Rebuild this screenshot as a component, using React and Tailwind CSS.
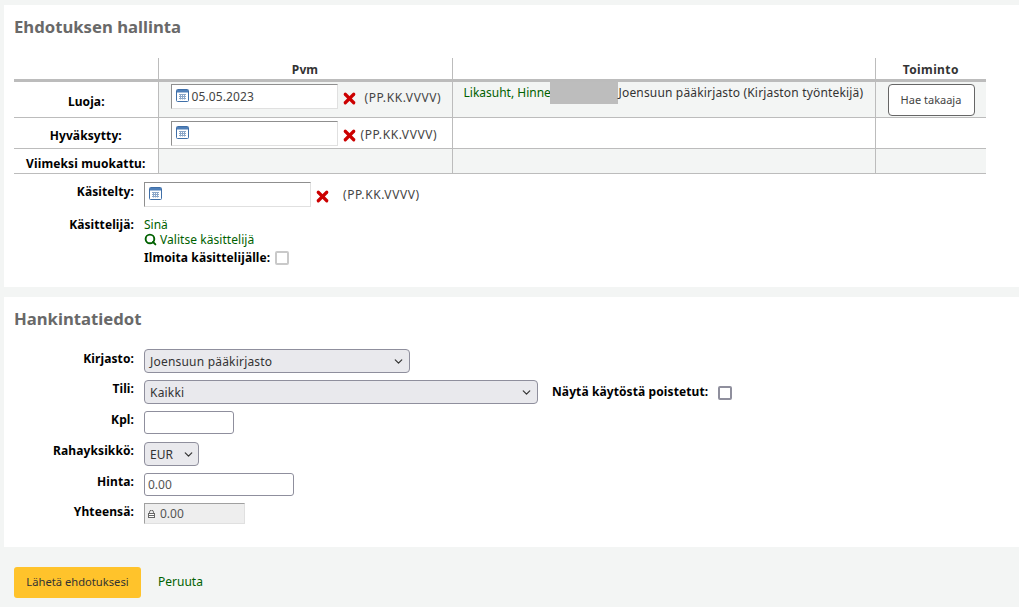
import React from 'react';
import { Search, ChevronDown, X } from 'lucide-react';

const green = 'text-[#006100]';

const CalendarIcon = () => (
  <svg width="13" height="13" viewBox="0 0 13 13" className="shrink-0">
    <rect x="0.5" y="0.5" width="12" height="12" rx="1" fill="#fff" stroke="#3f6fa8" />
    <rect x="1" y="1" width="11" height="2.5" fill="#4f7fb8" />
    <path d="M3 5.5h7M3 7.5h7M3 9.5h7M4.5 5v5.5M6.5 5v5.5M8.5 5v5.5" stroke="#8aa6c8" strokeWidth="1" />
  </svg>
);

const LockIcon = () => (
  <svg width="7" height="8" viewBox="0 0 7 8" className="shrink-0">
    <path d="M1.5 3.5V2.2a2 2 0 0 1 4 0v1.3" fill="none" stroke="#666" strokeWidth="1" />
    <rect x="0.5" y="3.5" width="6" height="4" fill="#fff" stroke="#666" />
    <path d="M1 5.5h5" stroke="#666" />
  </svg>
);

const DateInput = ({ value }) => (
  <div className="w-[167px] h-[25px] bg-white border border-[#e0e0e0] border-t-[#8f8f8f] border-l-[#8f8f8f] flex items-start gap-[3px] pl-[4px] pt-[4px] text-[12px] text-[#444]">
    <CalendarIcon />
    <span className="leading-[15px] tracking-[0.1px]">{value}</span>
  </div>
);

const ClearIcon = () => <X size={17} strokeWidth={4.5} className="text-[#cc0000] shrink-0" />;

const Row = ({ label, height, children, alignTop = 'pt-0' }) => (
  <div className={`flex gap-[10px] ${height}`}>
    <div className={`w-[120px] text-right font-bold text-[12px] text-black leading-[16px] tracking-[0.1px] ${alignTop}`}>{label}</div>
    <div className="flex-1 flex items-start min-w-0">{children}</div>
  </div>
);

const Select = ({ value, width }) => (
  <div className={`${width} h-[24px] bg-[#e9e9ed] border border-[#8f8f9d] rounded-[4px] flex items-center justify-between pl-[5px] pr-[4px] text-[12px] text-[#333]`}>
    <span className="pt-[1px] tracking-[0.2px]">{value}</span>
    <ChevronDown size={13} strokeWidth={2.25} className="text-[#333] shrink-0" />
  </div>
);

const App = () => (
  <div className="min-h-[607px] bg-[#f3f5f4] pt-[5px] text-[12px] text-[#333] overflow-hidden" style={{ fontFamily: '"Noto Sans", sans-serif' }}>
    <section className="ml-[4px] h-[282px] bg-white px-[10px] pt-[12px]">
      <h2 className="font-bold text-[16.7px] leading-[20px] text-[#696969]">Ehdotuksen hallinta</h2>
      <table className="mt-[21px] w-[972px] table-fixed border-collapse text-[12px]">
        <colgroup>
          <col className="w-[144px]" />
          <col className="w-[294px]" />
          <col className="w-[423px]" />
          <col className="w-[111px]" />
        </colgroup>
        <thead>
          <tr className="h-[22px] border-b-[3px] border-[#bcbcbc]">
            <th className="border-r border-[#bcbcbc]"></th>
            <th className="border-r border-[#bcbcbc] font-bold text-center text-[#333] pt-[3px] tracking-[0.1px]">Pvm</th>
            <th className="border-r border-[#bcbcbc]"></th>
            <th className="font-bold text-center text-[#333] pt-[3px] tracking-[0.4px]">Toiminto</th>
          </tr>
        </thead>
        <tbody>
          <tr className="h-[37px] border-b border-[#bcbcbc]">
            <th className="border-r border-[#bcbcbc] font-bold text-center text-black pt-[4px] pl-[1px] tracking-[0.1px]">Luoja:</th>
            <td className="border-r border-[#bcbcbc] bg-[#f3f5f4] align-top pl-[12px] pt-[2px]">
              <div className="flex items-start">
                <DateInput value="05.05.2023" />
                <span className="mt-[6px] ml-[3px]"><ClearIcon /></span>
                <span className="ml-[7px] mt-[6px] leading-[16px] text-[#444] tracking-[0.6px]">(PP.KK.VVVV)</span>
              </div>
            </td>
            <td className="border-r border-[#bcbcbc] bg-[#f3f5f4] align-top pl-[11px]">
              <div className="flex items-start">
                <span className={`${green} mt-[3px] leading-[16px] w-[86px] whitespace-nowrap`}>Likasuht, Hinne</span>
                <span className="block w-[68px] h-[22px] bg-[#bdbdbd]"></span>
                <span className="ml-[1px] mt-[3px] leading-[16px] whitespace-nowrap tracking-[0.17px]">Joensuun pääkirjasto (Kirjaston työntekijä)</span>
              </div>
            </td>
            <td className="bg-[#f3f5f4] align-top pl-[12px] pt-[2px]">
              <div className="w-[87px] h-[32px] bg-white border border-[#666] rounded-[4px] flex items-center justify-center text-[11px] text-[#444]">Hae takaaja</div>
            </td>
          </tr>
          <tr className="h-[31px] border-b border-[#bcbcbc]">
            <th className="border-r border-[#bcbcbc] font-bold text-center text-black pt-[6px] tracking-[0.1px]">Hyväksytty:</th>
            <td className="border-r border-[#bcbcbc] align-top pl-[12px] pt-[3px]">
              <div className="flex items-start">
                <DateInput />
                <span className="mt-[6px] ml-[3px]"><ClearIcon /></span>
                <span className="ml-[3px] mt-[6px] leading-[16px] text-[#444] tracking-[0.6px]">(PP.KK.VVVV)</span>
              </div>
            </td>
            <td className="border-r border-[#bcbcbc]"></td>
            <td></td>
          </tr>
          <tr className="h-[25px] border-b border-[#bcbcbc]">
            <th className="border-r border-[#bcbcbc] font-bold text-center text-black pt-[6px] tracking-[0.12px]">Viimeksi muokattu:</th>
            <td className="border-r border-[#bcbcbc] bg-[#f3f5f4]"></td>
            <td className="border-r border-[#bcbcbc] bg-[#f3f5f4]"></td>
            <td className="bg-[#f3f5f4]"></td>
          </tr>
        </tbody>
      </table>

      <div className="mt-[8px]">
        <Row label="Käsitelty:" height="h-[35px]" alignTop="pt-[2px]">
          <DateInput />
          <span className="mt-[6px] ml-[3px]"><ClearIcon /></span>
          <span className="ml-[12px] mt-[5px] leading-[16px] text-[#444] tracking-[0.6px]">(PP.KK.VVVV)</span>
        </Row>
        <Row label="Käsittelijä:" height="h-[48px]">
          <div className="flex flex-col">
            <span className={`${green} leading-[15px]`}>Sinä</span>
            <span className={`${green} leading-[15px] flex items-center gap-[3px] tracking-[0.05px]`}>
              <Search size={13} strokeWidth={3.5} />Valitse käsittelijä
            </span>
            <span className="flex items-center gap-[5px] font-bold text-black leading-[17px] pt-[2px] tracking-[0.1px]">
              Ilmoita käsittelijälle:
              <span className="block w-[14px] h-[14px] bg-white border-2 border-[#c9c9c9] rounded-[2px]"></span>
            </span>
          </div>
        </Row>
      </div>
    </section>

    <section className="ml-[4px] mt-[10px] h-[250px] bg-white px-[10px] pt-[12px]">
      <h2 className="font-bold text-[16.7px] leading-[20px] text-[#696969]">Hankintatiedot</h2>
      <div className="mt-[20px]">
        <Row label="Kirjasto:" height="h-[31px]" alignTop="pt-[2px]">
          <Select value="Joensuun pääkirjasto" width="w-[266px]" />
        </Row>
        <Row label="Tili:" height="h-[31px]" alignTop="pt-[1px]">
          <Select value="Kaikki" width="w-[394px]" />
          <span className="ml-[14px] mt-[4px] font-bold text-black leading-[16px] tracking-[0.1px]">Näytä käytöstä poistetut:</span>
          <span className="ml-[10px] mt-[6px] block w-[14px] h-[14px] bg-white border-2 border-[#8f8f9d] rounded-[2px]"></span>
        </Row>
        <Row label="Kpl:" height="h-[31px]" alignTop="pt-[1px]">
          <div className="w-[90px] h-[23px] bg-white border border-[#8f8f9d] rounded-[3px]"></div>
        </Row>
        <Row label="Rahayksikkö:" height="h-[31px]" alignTop="pt-[1px]">
          <div className="w-[55px] h-[24px] bg-[#e9e9ed] border border-[#8f8f9d] rounded-[4px] flex items-center justify-between pl-[5px] pr-[3px] text-[12px] text-[#333]">
            <span className="pt-[1px]">EUR</span>
            <ChevronDown size={13} strokeWidth={2.25} className="shrink-0" />
          </div>
        </Row>
        <Row label="Hinta:" height="h-[30px]" alignTop="pt-[1px]">
          <div className="w-[150px] h-[23px] bg-white border border-[#8f8f9d] rounded-[3px] pl-[3px] flex items-center text-[#555]">0.00</div>
        </Row>
        <Row label="Yhteensä:" height="h-[30px]" alignTop="pt-[1px]">
          <div className="w-[101px] h-[21px] bg-[#eeeeee] border border-[#e0e0e0] border-t-[#a0a0a0] border-l-[#a0a0a0] flex items-center pl-[3px] gap-[5px] text-[#555]">
            <LockIcon />
            <span>0.00</span>
          </div>
        </Row>
      </div>
    </section>

    <div className="flex items-center pl-[14px] mt-[20px]">
      <div className="w-[127px] h-[31px] bg-[#ffc32b] rounded-[3px] flex items-center justify-center text-[11.2px] text-[#333]">Lähetä ehdotuksesi</div>
      <span className={`${green} ml-[17px] pb-[1px]`}>Peruuta</span>
    </div>
  </div>
);

export default App;
